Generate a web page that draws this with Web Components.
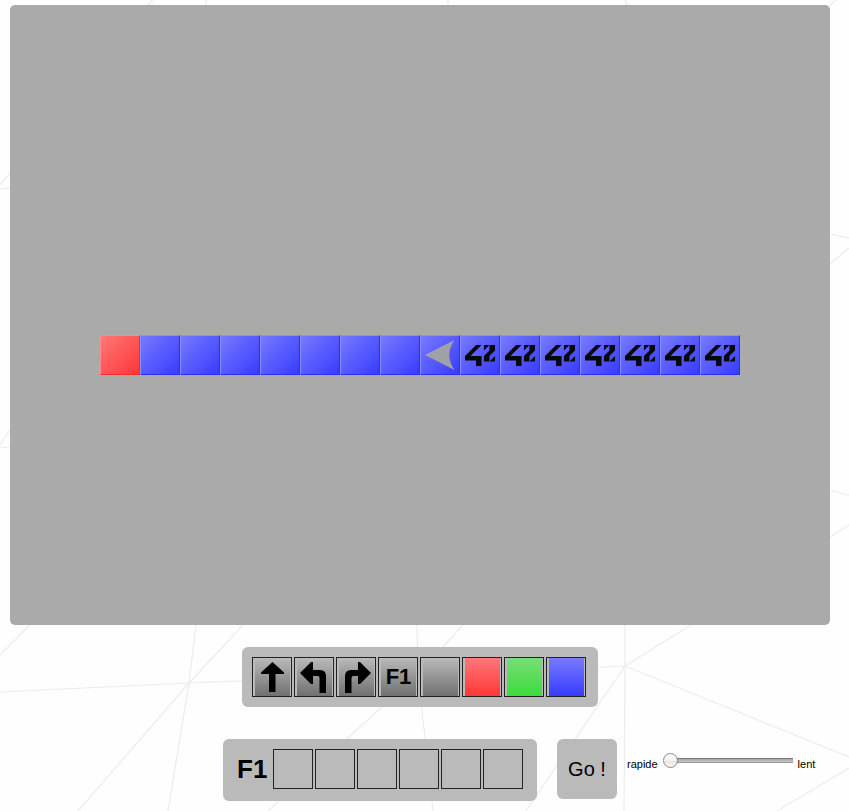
<!DOCTYPE html>
<html lang="fr">
<head>
<meta charset="utf-8">
<meta name="viewport" content="width=device-width">
<title>Robot</title>
<style>
  body { margin: 0; background: #fefefe; color: #000; font-family: "Liberation Sans", Arial, sans-serif; }
</style>
</head>
<body>
<robot-game></robot-game>
<script>
const define = (name, html, init) => {
  const template = document.createElement('template');
  template.innerHTML = html;
  customElements.define(name, class extends HTMLElement {
    constructor() {
      super();
      this.attachShadow({ mode: 'open' }).append(template.content.cloneNode(true));
    }
    connectedCallback() { if (init) init(this, this.shadowRoot); }
  });
};

const PALETTE = `
  :host { --hi: #bababa; --lo: #707070; }
  :host([color=red]) { --hi: #ff7878; --lo: #ff3636; --edge-hi: #ff8c8c; --edge-lo: #f42c2c; }
  :host([color=green]) { --hi: #78dd78; --lo: #3cdc3c; }
  :host([color=blue]) { --hi: #787aff; --lo: #363cff; --edge-hi: #8c90ff; --edge-lo: #2c30ee; }`;

/* Web of thin lines behind the page */
define('line-web', `
  <style>
    :host { position: absolute; inset: 0; z-index: -1; overflow: hidden; pointer-events: none; }
    svg { display: block; width: 849px; height: 811px; }
    path { fill: none; stroke: #ececec; stroke-width: 1.2; }
  </style>
  <svg viewBox="0 0 849 811" aria-hidden="true"><path d="
    M148 5L153 0 M206 5V0 M448 5V0 M627 5L625 0 M828 7L836 0
    M0 185L10 173 M0 189L10 188 M0 445L10 430 M0 448L10 447
    M830 234L849 238 M830 264L849 248 M830 490L849 495 M830 537L849 525
    M0 655L30 625 M0 692L189 683L420 674L625 666
    M196 625L189 683L168 811 M243 625L189 683L78 811
    M417 625L418 674L433 811 M463 625L418 674L268 811
    M625 625V666L624 811 M691 625L625 666L526 811 M625 666L849 757 M849 768L777 811"/></svg>`);

define('board-tile', `
  <style>${PALETTE}
    :host { display: block; box-sizing: border-box; width: 40px; height: 40px;
      border: 1px solid; border-color: var(--edge-hi) var(--edge-lo) var(--edge-lo) var(--edge-hi);
      background: linear-gradient(135deg, var(--hi), var(--lo)); }
    svg { display: none; width: 38px; height: 38px; }
    :host([item=robot]) .robot, :host([item=logo]) .logo { display: block; }
  </style>
  <svg class="robot" viewBox="1 1 38 38"><path fill="#a0a1a4" d="M5 20L34.5 5Q24 20 34.5 35Z"/></svg>
  <svg class="logo" viewBox="1 1 38 38"><g fill="#080808" transform="translate(5 10) scale(.0335) translate(-32 51)">
    <path d="M32 412.6H362.1V578H526.8V279.1H197.3L526.8-51.1H362.1L32 279.1Z"/>
    <path d="M597.9 114.2L762.7-51.1H597.9Z"/>
    <path d="M762.7 114.2L597.9 279.1V443.9H762.7V279.1L928 114.2V-51.1H762.7Z"/>
    <path d="M928 279.1L762.7 443.9H928Z"/></g></svg>`);

define('game-board', `
  <style>
    :host { display: flex; justify-content: center; align-items: flex-start; box-sizing: border-box;
      min-height: 620px; padding: 330px 10px 10px; border-radius: 5px; background: #aaa; }
  </style>
  <slot></slot>`);

define('tool-panel', `
  <style>
    :host { display: flex; align-items: center; gap: 2px; padding: 10px 12px 10px 10px;
      border-radius: 6px; background: #bababa; }
  </style>
  <slot></slot>`);

define('tool-button', `
  <style>${PALETTE}
    :host { display: block; }
    button { display: block; box-sizing: border-box; width: 40px; height: 40px; margin: 0;
      padding: 0 1px 0 2px; border: 1px solid #222; border-radius: 0; background: #bdbaba; }
    span { display: flex; align-items: center; justify-content: center; height: 38px;
      background: linear-gradient(var(--hi), var(--lo)); font: bold 22px "Liberation Sans", Arial, sans-serif; color: #000; }
    svg { width: 35px; height: 38px; }
  </style>
  <button type="button"><span><slot></slot></span></button>`,
  (host, root) => {
    const label = host.getAttribute('label');
    if (label) root.querySelector('button').setAttribute('aria-label', label);
  });

define('program-line', `
  <style>
    :host { display: flex; align-items: center; gap: 2px; padding: 10px 14px 12px; border-radius: 6px; background: #bababa; }
    b { width: 34px; font-size: 26px; line-height: 40px; white-space: nowrap; }
    i { box-sizing: border-box; width: 40px; height: 40px; border: 1px solid #222; }
  </style>
  <b><slot></slot></b><i></i><i></i><i></i><i></i><i></i><i></i>`);

define('go-button', `
  <style>
    :host { display: block; }
    button { display: block; width: 60px; height: 60px; padding: 0; border: 0; border-radius: 6px;
      background: #bababa; color: #000; font: 20px "Liberation Sans", Arial, sans-serif; }
  </style>
  <button type="button"><slot></slot></button>`);

define('speed-slider', `
  <style>
    :host { display: flex; align-items: flex-start; gap: 5px; font-size: 11px; line-height: 14px; }
    label, span { margin-top: 4px; }
    input { appearance: none; -webkit-appearance: none; width: 130px; height: 15px; margin: 0;
      background: linear-gradient(#777 1px, #aaa 1px, #c4c4c4 4px, #999 4px) right center / 122px 5px no-repeat; }
    input::-webkit-slider-runnable-track { height: 15px; background: none; }
    input::-webkit-slider-thumb { appearance: none; -webkit-appearance: none; box-sizing: border-box;
      width: 15px; height: 15px; border: 1px solid #8a8a8a; border-radius: 50%;
      background: linear-gradient(#fdfdfd, #f2f2f2 50%, #e6e6e6 51%, #f6f6f6); }
  </style>
  <label for="speed">rapide</label>
  <input id="speed" type="range" min="0" max="100" value="0">
  <span>lent</span>`);

define('robot-game', `
  <style>
    :host { display: block; padding: 5px 19px 10px 10px; }
    .tools { display: flex; justify-content: center; margin-top: 22px; }
    .run { display: grid; grid-template-columns: 1fr auto 1fr; align-items: start; margin-top: 32px; }
    .program { grid-column: 2; display: flex; align-items: flex-start; gap: 20px; }
    speed-slider { padding: 14px 0 0 10px; }
  </style>
  <line-web></line-web>
  <game-board>
    <board-tile color="red"></board-tile>
    ${'<board-tile color="blue"></board-tile>'.repeat(7)}
    <board-tile color="blue" item="robot"></board-tile>
    ${'<board-tile color="blue" item="logo"></board-tile>'.repeat(7)}
  </game-board>
  <div class="tools"><tool-panel>
    <tool-button label="Avancer"><svg viewBox="3 1 35 38"><path d="M20.5 5L32 15.5V17H23.5V35H17V17H9V15.5Z"/></svg></tool-button>
    <tool-button label="Gauche"><svg viewBox="3 1 35 38"><path d="M6 16L17 5H19V13H26Q32 13 32 19V36H25.5V21Q25.5 19 23.5 19H19V27H17Z"/></svg></tool-button>
    <tool-button label="Droite"><svg viewBox="3 1 35 38"><path d="M35 16L24 5H22V13H15Q9 13 9 19V36H15.5V21Q15.5 19 17.5 19H22V27H24Z"/></svg></tool-button>
    <tool-button>F1</tool-button>
    <tool-button label="Gris"></tool-button>
    <tool-button label="Rouge" color="red"></tool-button>
    <tool-button label="Vert" color="green"></tool-button>
    <tool-button label="Bleu" color="blue"></tool-button>
  </tool-panel></div>
  <div class="run">
    <div class="program"><program-line>F1</program-line><go-button>Go !</go-button></div>
    <speed-slider></speed-slider>
  </div>`);
</script>
</body>
</html>
